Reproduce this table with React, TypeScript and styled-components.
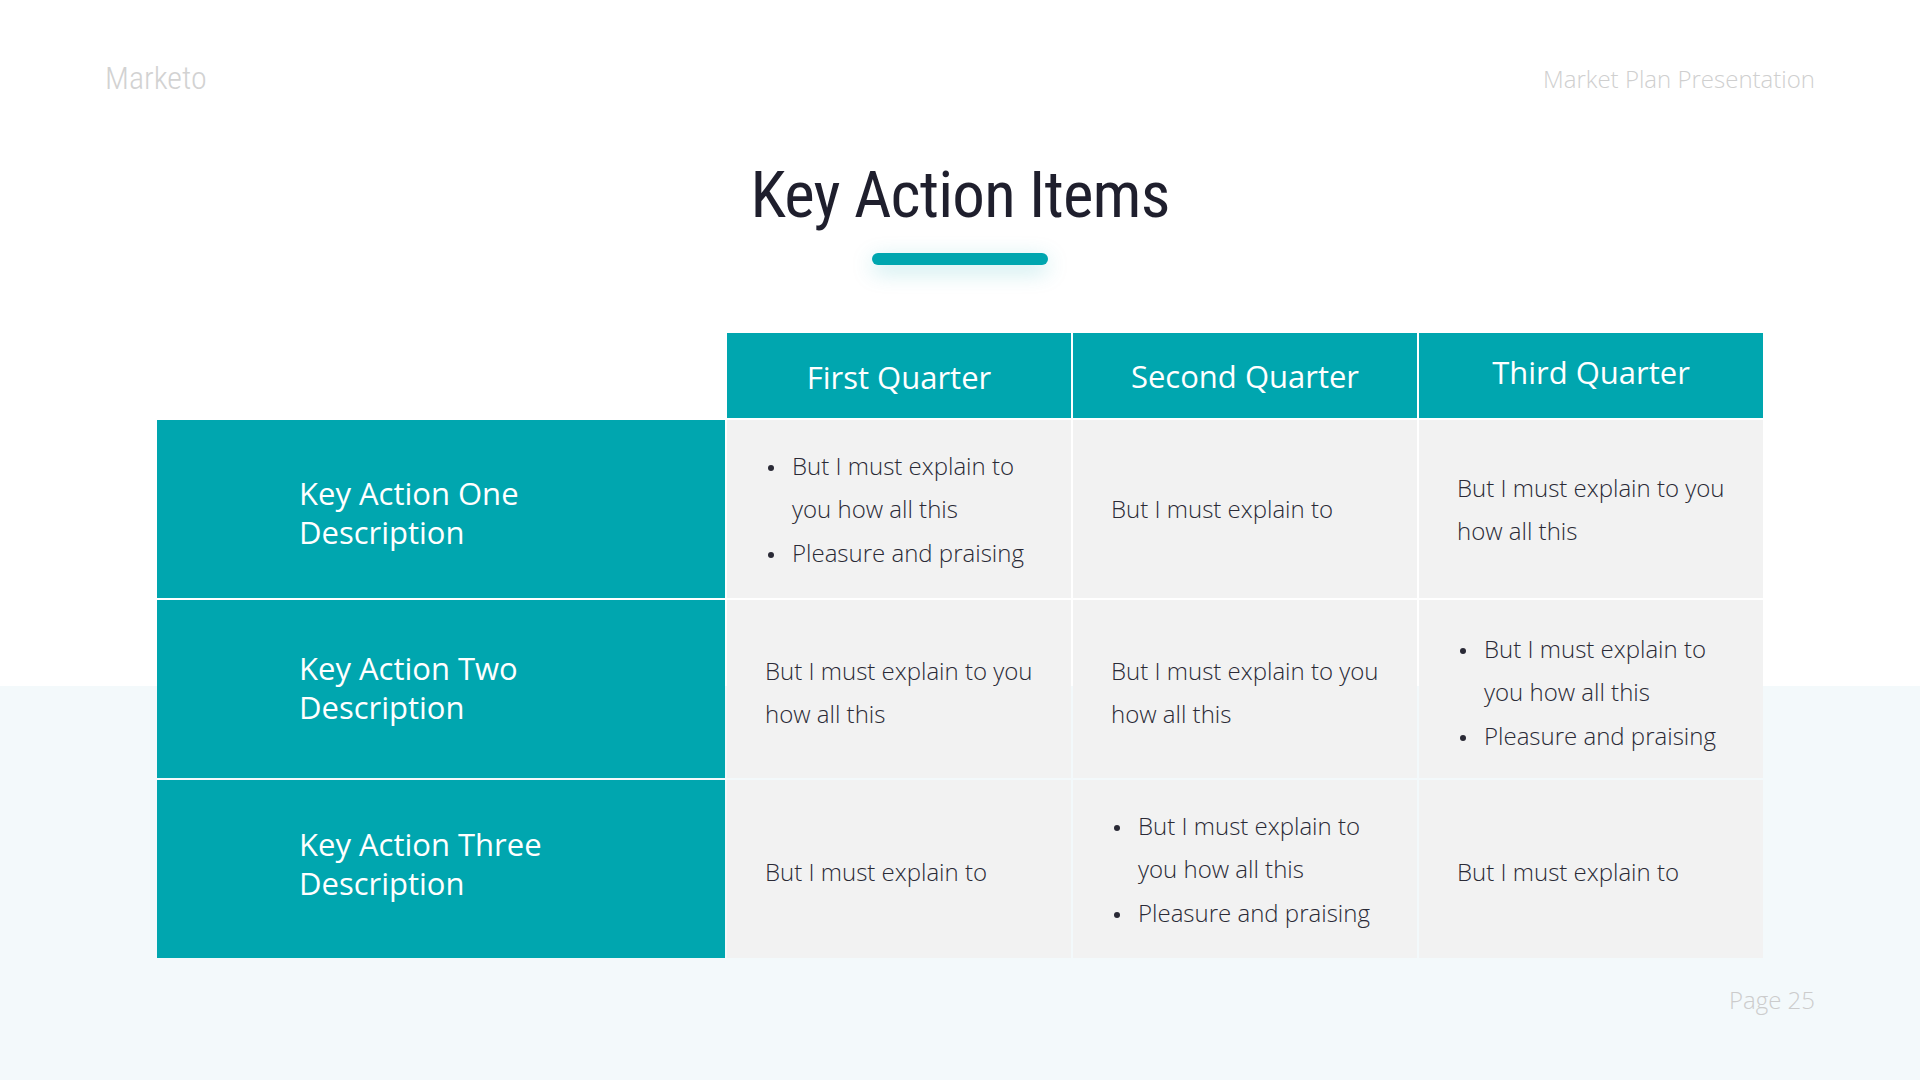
import React from "react";
import styled, { createGlobalStyle } from "styled-components";

const TEAL = "#00a6af";

const GlobalStyle = createGlobalStyle`
    html, body {
        margin: 0;
        padding: 0;
    }
    body {
        font-family: "Open Sans", "Liberation Sans", sans-serif;
    }
`;

// moves centred content down (positive) or up (negative) inside a flex cell
const nudge = (n = 0) =>
    n >= 0 ? `padding-top: ${n * 2}px;` : `padding-bottom: ${-n * 2}px;`;

const Slide = styled.div`
    width: 1920px;
    height: 1080px;
    overflow: hidden;
    background: linear-gradient(to bottom, #ffffff 0, #ffffff 686px, #f3f9fb 686px);
    display: flex;
    flex-direction: column;
`;

const TopBar = styled.header`
    height: 156px;
    padding: 0 105px;
    display: flex;
    align-items: center;
    justify-content: space-between;
`;

const Brand = styled.div`
    font-family: "Roboto Condensed", Roboto, sans-serif;
    font-stretch: condensed;
    font-weight: 300;
    font-size: 32px;
    color: #d2d2d2;
`;

const DeckName = styled.div`
    font-family: "Open Sans", sans-serif;
    font-weight: 300;
    font-size: 24px;
    color: #cfcfcf;
`;

const Title = styled.h1`
    margin: 6px 0 0;
    text-align: center;
    font-family: "Roboto Condensed", Roboto, sans-serif;
    font-stretch: condensed;
    font-weight: 400;
    font-size: 65px;
    letter-spacing: -0.8px;
    line-height: 66px;
    color: #1f1f2d;
`;

const Underline = styled.div`
    width: 176px;
    height: 12px;
    margin: 25px auto 0;
    border-radius: 6px;
    background: ${TEAL};
    box-shadow: 0 6px 22px rgba(0, 166, 175, 0.28);
`;

const Grid = styled.div`
    margin: 68px auto 0;
    display: grid;
    grid-template-columns: 568px repeat(3, 344px);
    grid-template-rows: 85px repeat(3, 178px);
    gap: 2px;
`;

const Corner = styled.div``;

const HeadCell = styled.div<{ $shift?: number }>`
    background: ${TEAL};
    color: #ffffff;
    font-size: 31px;
    font-weight: 400;
    display: flex;
    align-items: center;
    justify-content: center;
    ${(p) => nudge(p.$shift)}
`;

const LabelCell = styled.div<{ $shift?: number }>`
    background: ${TEAL};
    color: #ffffff;
    font-size: 31px;
    font-weight: 400;
    line-height: 39px;
    padding-left: 142px;
    display: flex;
    flex-direction: column;
    justify-content: center;
    ${(p) => nudge(p.$shift)}
`;

const BodyCell = styled.div<{ $shift?: number }>`
    background: #f2f2f2;
    color: #2a2a36;
    font-size: 24px;
    font-weight: 300;
    line-height: 43.5px;
    padding-left: 38px;
    padding-right: 30px;
    display: flex;
    align-items: center;
    ${(p) => nudge(p.$shift)}
`;

const Bullets = styled.ul`
    margin: 0;
    padding: 0 0 0 27px;
    list-style: none;

    li::before {
        content: "";
        display: inline-block;
        width: 6px;
        height: 6px;
        border-radius: 50%;
        background: currentColor;
        margin-left: -24px;
        margin-right: 18px;
        vertical-align: middle;
    }
`;

const Footer = styled.footer`
    margin-top: 30px;
    padding: 0 105px;
    text-align: right;
    font-weight: 300;
    font-size: 24px;
    line-height: 24px;
    color: #cccccc;
`;

type CellData = string | string[];

interface RowData {
    name: string;
    labelShift: number;
    cellShift: number;
    cells: CellData[];
}

const BULLETS = ["But I must explain to you how all this", "Pleasure and praising"];

const quarters: { title: string; shift: number }[] = [
    { title: "First Quarter", shift: 1 },
    { title: "Second Quarter", shift: 0 },
    { title: "Third Quarter", shift: -4 },
];

const rows: RowData[] = [
    {
        name: "Key Action One",
        labelShift: 4,
        cellShift: 0,
        cells: [BULLETS, "But I must explain to", "But I must explain to you how all this"],
    },
    {
        name: "Key Action Two",
        labelShift: -1,
        cellShift: 3,
        cells: ["But I must explain to you how all this", "But I must explain to you how all this", BULLETS],
    },
    {
        name: "Key Action Three",
        labelShift: -5,
        cellShift: 3,
        cells: ["But I must explain to", BULLETS, "But I must explain to"],
    },
];

function Cell({ data, shift }: { data: CellData; shift: number }) {
    return (
        <BodyCell $shift={shift}>
            {Array.isArray(data) ? (
                <Bullets>
                    {data.map((item) => (
                        <li key={item}>{item}</li>
                    ))}
                </Bullets>
            ) : (
                <div>{data}</div>
            )}
        </BodyCell>
    );
}

export default function App() {
    return (
        <>
            <GlobalStyle />
            <Slide>
                <TopBar>
                    <Brand>Marketo</Brand>
                    <DeckName>Market Plan Presentation</DeckName>
                </TopBar>
                <Title>Key Action Items</Title>
                <Underline />
                <Grid>
                    <Corner />
                    {quarters.map((q) => (
                        <HeadCell key={q.title} $shift={q.shift}>
                            {q.title}
                        </HeadCell>
                    ))}
                    {rows.map((row) => (
                        <React.Fragment key={row.name}>
                            <LabelCell $shift={row.labelShift}>
                                <span>{row.name}</span>
                                <span>Description</span>
                            </LabelCell>
                            {row.cells.map((c, i) => (
                                <Cell key={i} data={c} shift={Array.isArray(c) && row.name.endsWith("Three") ? 0 : row.cellShift} />
                            ))}
                        </React.Fragment>
                    ))}
                </Grid>
                <Footer>Page 25</Footer>
            </Slide>
        </>
    );
}
